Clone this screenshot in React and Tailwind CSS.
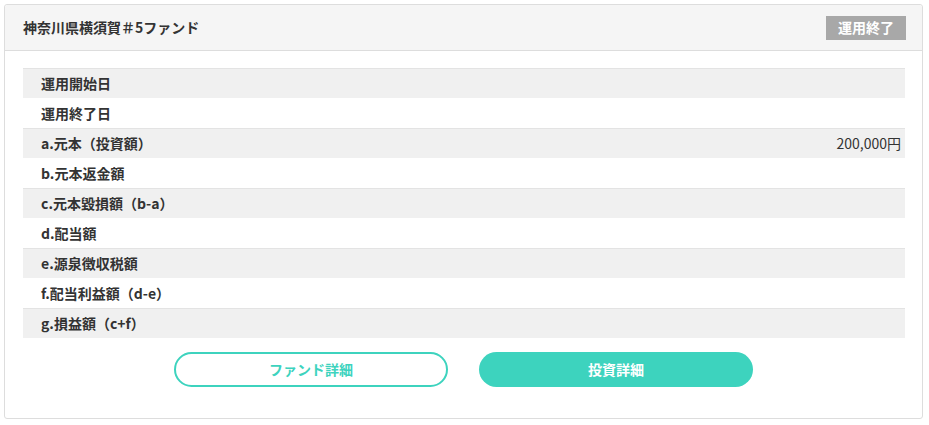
export default function App() {
  const rows = [
    ["運用開始日", ""],
    ["運用終了日", ""],
    ["a.元本（投資額）", "200,000円"],
    ["b.元本返金額", ""],
    ["c.元本毀損額（b-a）", ""],
    ["d.配当額", ""],
    ["e.源泉徴収税額", ""],
    ["f.配当利益額（d-e）", ""],
    ["g.損益額（c+f）", ""],
  ];
  return (
    <div className="w-[929px] h-[425px] bg-white pt-[4px] pl-[4px]" style={{ fontFamily: '"Noto Sans CJK JP", "Noto Sans", sans-serif' }}>
      <div className="w-[919px] h-[415px] border border-[#dddddd] rounded-[3px] flex flex-col">
        <div className="h-[46px] bg-[#f5f5f5] border-b border-[#dddddd] flex items-center justify-between pl-[18px] pr-[16px] rounded-t-[3px]">
          <span className="text-[14px] font-bold text-[#333333]">神奈川県横須賀＃5ファンド</span>
          <span className="h-[24px] w-[80px] bg-[#a8a8a8] text-white text-[14px] font-bold flex items-center justify-center">運用終了</span>
        </div>
        <div className="pt-[17px] pl-[18px] pr-[17px]">
          {rows.map(([label, value], i) => (
            <div key={i} className={`h-[30px] flex items-center justify-between pl-[18px] pr-[4px] ${i % 2 === 0 ? "bg-[#f0f0f0] border-t border-[#e3e3e3]" : "bg-white"}`}>
              <span className="text-[14px] font-bold text-[#333333]">{label}</span>
              <span className="text-[14px] text-[#333333]">{value}</span>
            </div>
          ))}
        </div>
        <div className="flex justify-center gap-[31px] mt-[14px]">
          <button className="w-[274px] h-[35px] rounded-full border-2 border-[#3dd3be] text-[#3dd3be] text-[14px] font-bold flex items-center justify-center bg-white">ファンド詳細</button>
          <button className="w-[274px] h-[35px] rounded-full bg-[#3dd3be] text-white text-[14px] font-bold flex items-center justify-center">投資詳細</button>
        </div>
      </div>
    </div>
  );
}
